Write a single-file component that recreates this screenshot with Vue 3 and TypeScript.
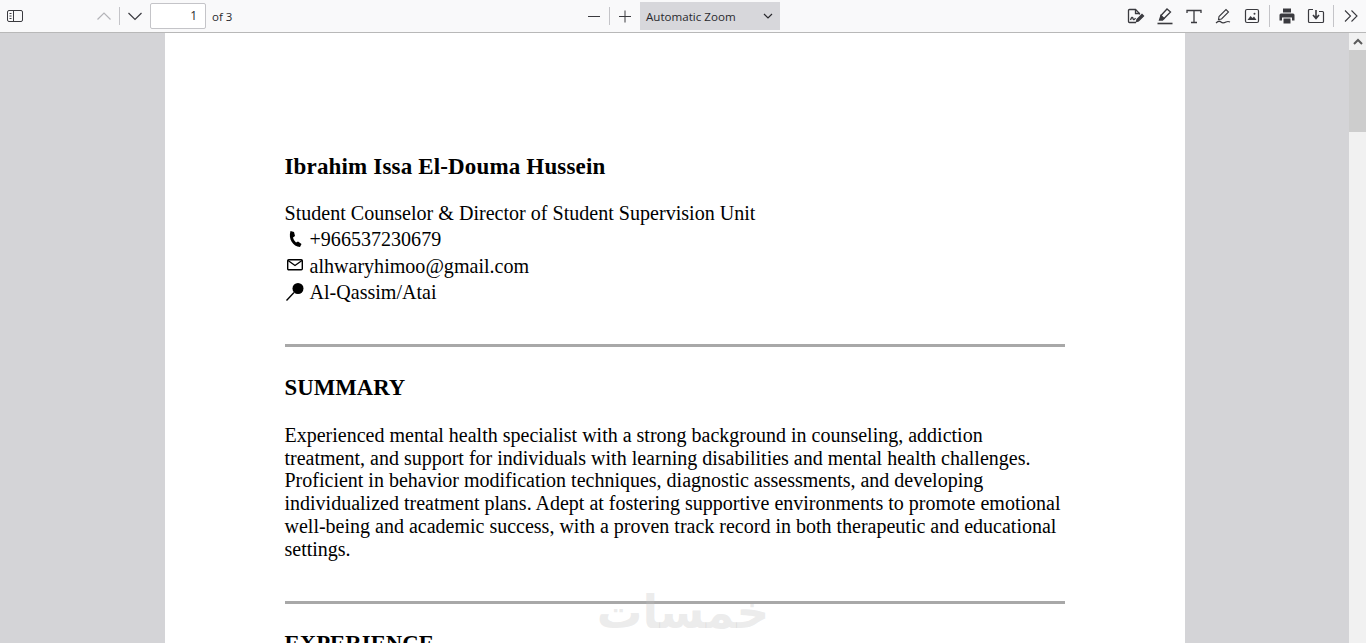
<template>
  <div class="viewer">
    <header class="toolbar">
      <div class="side left">
        <button class="tool sidebar-btn">
          <svg width="16" height="16" viewBox="0 0 16 16" fill="none" stroke="#3a3a3f">
            <rect x="0.5" y="2.5" width="15" height="11" rx="1.5" />
            <path d="M6.5 2.5v11M2.5 5.5h2M2.5 8h2M2.5 10.5h2" />
          </svg>
        </button>
        <div class="pager">
          <button class="tool step">
            <svg width="16" height="16" viewBox="0 0 16 16" fill="none" stroke="#b4b4b8" stroke-width="1.2">
              <path d="M1.5 11.5 8 5l6.5 6.5" />
            </svg>
          </button>
          <span class="sep"></span>
          <button class="tool step">
            <svg width="16" height="16" viewBox="0 0 16 16" fill="none" stroke="#3a3a3f" stroke-width="1.2">
              <path d="M1.5 5 8 11.5 14.5 5" />
            </svg>
          </button>
          <div class="page-box">1</div>
          <span class="page-of">of 3</span>
        </div>
      </div>
      <div class="zoom">
        <button class="tool step">
          <svg width="16" height="16" viewBox="0 0 16 16" stroke="#3a3a3f"><path d="M2 8.500h12" /></svg>
        </button>
        <span class="sep"></span>
        <button class="tool step">
          <svg width="16" height="16" viewBox="0 0 16 16" stroke="#3a3a3f"><path d="M2 8.500h12M8 2.500v12" /></svg>
        </button>
        <div class="zoom-select">
          <span>Automatic Zoom</span>
          <svg width="10" height="6" viewBox="0 0 10 6" fill="none" stroke="#2a2a2e" stroke-width="1.2">
            <path d="M1 1l4 4 4-4" />
          </svg>
        </div>
      </div>
      <div class="side right">
        <button class="tool wide">
          <svg width="18" height="18" viewBox="0 0 18 18" fill="none" stroke="#3a3a3f" stroke-width="1.3">
            <path d="M9 15.500H2.500a1 1 0 0 1-1-1v-11a1 1 0 0 1 1-1h6l4 4v1" />
            <path d="M8.500 2.500v4h4" />
            <path d="M3.500 13c1-3 2-3.500 2.500-1.500s1.500 1 2.500-.5" />
            <path d="M10 12.500l5-5 1.500 1.500-5 5-2 .5z" fill="#3a3a3f" />
          </svg>
        </button>
        <button class="tool wide">
          <svg width="18" height="18" viewBox="0 0 18 18" fill="none" stroke="#3a3a3f" stroke-width="1.3">
            <path d="M6 11.500l-1-3 6-6.500 3.500 3-6.500 6.500z" />
            <path d="M5 8.500l3 3-1.500 1.500H3.500z" fill="#3a3a3f" />
            <path d="M1.500 16.500h15" stroke-width="1.600" />
          </svg>
        </button>
        <button class="tool wide">
          <svg width="18" height="18" viewBox="0 0 18 18" fill="none" stroke="#3a3a3f" stroke-width="1.3">
            <path d="M2 6V3.500h14V6M9 3.500v12M6 15.500h6" />
          </svg>
        </button>
        <button class="tool wide">
          <svg width="18" height="18" viewBox="0 0 18 18" fill="none" stroke="#3a3a3f" stroke-width="1.1">
            <path d="M4.500 12.500l.5-3 7-7 2.500 2.500-7 7z" />
            <path d="M2 16c2-2 4-2 5-1s3 1 5 0 3-.5 4 0" />
          </svg>
        </button>
        <button class="tool wide">
          <svg width="18" height="18" viewBox="0 0 18 18" fill="none" stroke="#3a3a3f" stroke-width="1.2">
            <rect x="2.500" y="2.500" width="13" height="13" rx="1.500" />
            <path d="M4.500 13l3-4 2 2 1.500-1.500 2.500 3.500z" fill="#3a3a3f" stroke="none" />
            <circle cx="11.500" cy="6.800" r="1" fill="#3a3a3f" stroke="none" />
          </svg>
        </button>
        <span class="sep tall"></span>
        <button class="tool wide">
          <svg width="18" height="18" viewBox="0 0 18 18" fill="#3a3a3f">
            <path d="M5 1.500h8v4H5zM3 6.500h12a1.500 1.500 0 0 1 1.500 1.500v5.500H14v-3H4v3H1.500V8A1.500 1.500 0 0 1 3 6.500z" />
            <path d="M5.500 11.500h7v5h-7z" />
          </svg>
        </button>
        <button class="tool wide">
          <svg width="18" height="18" viewBox="0 0 18 18" fill="none" stroke="#3a3a3f" stroke-width="1.2">
            <path d="M6 2.500H2.500a1 1 0 0 0-1 1v11a1 1 0 0 0 1 1h13a1 1 0 0 0 1-1v-9a1 1 0 0 0-1-1H12" />
            <path d="M9 3v8M6 8l3 3.500L12 8" stroke-width="1.600" />
          </svg>
        </button>
        <span class="sep tall"></span>
        <button class="tool wide">
          <svg width="16" height="16" viewBox="0 0 16 16" fill="none" stroke="#3a3a3f" stroke-width="1.1">
            <path d="M2 2.500 7.500 8 2 13.500M8.500 2.500 14 8l-5.500 5.500" />
          </svg>
        </button>
      </div>
    </header>

    <div class="content">
      <main class="canvas">
        <article class="page">
          <h1>Ibrahim Issa El-Douma Hussein</h1>
          <p class="role">Student Counselor &amp; Director of Student Supervision Unit</p>
          <ul class="contact">
            <li v-for="item in contacts" :key="item.text">
              <svg width="20" height="20" viewBox="0 0 20 20" v-html="item.icon"></svg>
              <span>{{ item.text }}</span>
            </li>
          </ul>
          <hr class="first-rule" />
          <h2>SUMMARY</h2>
          <p class="summary">
            <span v-for="line in summary" :key="line">{{ line }}</span>
          </p>
          <hr class="second-rule" />
          <h2 class="cut">EXPERIENCE</h2>
        </article>
        <div class="watermark" dir="rtl">خمسات</div>
      </main>
      <aside class="scrollbar">
        <div class="arrow">
          <svg width="10" height="7" viewBox="0 0 10 7" fill="none" stroke="#5a5a5a" stroke-width="2">
            <path d="M1 6l4-4 4 4" />
          </svg>
        </div>
        <div class="thumb"></div>
      </aside>
    </div>
  </div>
</template>

<script setup lang="ts">
interface Contact {
  icon: string;
  text: string;
}

const contacts: Contact[] = [
  {
    icon: '<path d="M5.500 1 9 2l1 4-2 1.500c.5 2 1.500 3.500 3 5l2-1 3.500 2.500-1.500 3C8 16.500 3 9 5.500 1z" fill="#000"/>',
    text: '+966537230679',
  },
  {
    icon: '<rect x="2.700" y="3.700" width="14.600" height="10" rx="1" fill="none" stroke="#000" stroke-width="1.400"/><path d="M3 4.500l7 5 7-5" fill="none" stroke="#000" stroke-width="1.400"/>',
    text: 'alhwaryhimoo@gmail.com',
  },
  {
    icon: '<circle cx="13" cy="5.500" r="5.500" fill="#000"/><path d="M9 9.500 1.500 17.500" stroke="#000" stroke-width="1.300"/>',
    text: 'Al-Qassim/Atai',
  },
];

const summary: string[] = [
  'Experienced mental health specialist with a strong background in counseling, addiction',
  'treatment, and support for individuals with learning disabilities and mental health challenges.',
  'Proficient in behavior modification techniques, diagnostic assessments, and developing',
  'individualized treatment plans. Adept at fostering supportive environments to promote emotional',
  'well-being and academic success, with a proven track record in both therapeutic and educational',
  'settings.',
];
</script>

<style>
html,
body {
  margin: 0;
  height: 100%;
  overflow: hidden;
}
</style>

<style scoped>
.viewer {
  display: flex;
  flex-direction: column;
  width: 1366px;
  height: 643px;
  overflow: hidden;
  background: #d4d4d7;
}

.toolbar {
  display: grid;
  grid-template-columns: 1fr auto 1fr;
  align-items: center;
  height: 32px;
  flex: none;
  background: #f9f9fa;
  border-bottom: 1px solid #b8b8b8;
  font-family: "Open Sans", "Liberation Sans", sans-serif;
  font-size: 11.500px;
  color: #2a2a2e;
  box-sizing: content-box;
}

.side,
.pager,
.zoom {
  display: flex;
  align-items: center;
}

.tool {
  display: flex;
  align-items: center;
  justify-content: center;
  width: 28px;
  height: 28px;
  padding: 0;
  border: none;
  background: none;
}

.tool.step {
  width: 30px;
}

.sidebar-btn {
  margin-left: 1px;
}

.pager {
  margin-left: 60px;
}

.sep {
  width: 1px;
  height: 18px;
  background: #c4c4c8;
}

.sep.tall {
  height: 22px;
  margin: 0 2.500px;
}

.page-box {
  box-sizing: border-box;
  width: 56px;
  height: 26px;
  padding-right: 8px;
  border: 1px solid #c4c4c8;
  border-radius: 2px;
  background: #fff;
  font-size: 12px;
  line-height: 24px;
  text-align: right;
}

.page-of {
  margin-left: 6px;
}

.zoom {
  margin-right: 7px;
}

.zoom-select {
  display: flex;
  align-items: center;
  justify-content: space-between;
  box-sizing: border-box;
  width: 140px;
  height: 28px;
  padding: 0 7px 0 6px;
  background: #d7d7db;
  font-size: 11.600px;
}

.right {
  justify-content: flex-end;
  padding-right: 1px;
}

.tool.wide {
  width: 29px;
}

.content {
  display: flex;
  flex: 1;
  min-height: 0;
}

.canvas {
  position: relative;
  display: flex;
  justify-content: center;
  flex: 1;
  min-width: 0;
  overflow: hidden;
}

.page {
  box-sizing: border-box;
  width: 1020px;
  height: 1320px;
  flex: none;
  padding: 120px 120px 0;
  background: #fff;
  color: #000;
  font-family: "Liberation Serif", "Times New Roman", serif;
}

h1 {
  margin: 0;
  font-size: 23px;
  line-height: 28px;
  font-weight: 700;
  letter-spacing: 0.16px;
}

.role {
  margin: 19px 0 0;
  font-size: 20.070px;
  line-height: 26px;
}

.contact {
  margin: 0.500px 0 0;
  padding: 0;
  list-style: none;
  font-size: 20.070px;
}

.contact li {
  display: flex;
  align-items: center;
  gap: 5px;
  height: 26.600px;
}

hr {
  height: 0;
  margin: 0;
  border: none;
  border-top: 3px solid #a8a8a8;
}

.first-rule {
  margin-top: 37.500px;
}

h2 {
  margin: 27px 0 0;
  font-size: 22.800px;
  line-height: 28px;
  font-weight: 700;
}

h2.cut {
  margin-top: 26px;
}

.summary {
  margin: 22px 0 0;
  font-size: 20px;
  line-height: 22.800px;
}

.summary span {
  display: block;
  white-space: nowrap;
}

.second-rule {
  margin-top: 40px;
}

.watermark {
  position: absolute;
  left: 595px;
  top: 550px;
  width: 176px;
  font-family: "DejaVu Sans", sans-serif;
  font-weight: 700;
  font-size: 45.500px;
  line-height: 60px;
  text-align: center;
  color: rgba(190, 190, 190, 0.3);
}

.scrollbar {
  position: relative;
  flex: none;
  width: 17px;
  background: #f1f1f1;
}

.arrow {
  display: flex;
  align-items: center;
  justify-content: center;
  height: 17px;
  background: #f1f1f1;
}

.thumb {
  height: 82px;
  background: #cdcdcd;
}
</style>
